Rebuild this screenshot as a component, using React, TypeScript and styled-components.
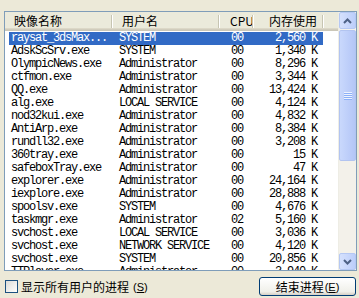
import styled, { createGlobalStyle } from "styled-components";

type Proc = {
  name: string;
  user: string;
  cpu: string;
  mem: string;
};

const processes: Proc[] = [
  { name: "raysat_3dsMax...", user: "SYSTEM", cpu: "00", mem: "2,560 K" },
  { name: "AdskScSrv.exe", user: "SYSTEM", cpu: "00", mem: "1,340 K" },
  { name: "OlympicNews.exe", user: "Administrator", cpu: "00", mem: "8,296 K" },
  { name: "ctfmon.exe", user: "Administrator", cpu: "00", mem: "3,344 K" },
  { name: "QQ.exe", user: "Administrator", cpu: "00", mem: "13,424 K" },
  { name: "alg.exe", user: "LOCAL SERVICE", cpu: "00", mem: "4,124 K" },
  { name: "nod32kui.exe", user: "Administrator", cpu: "00", mem: "4,832 K" },
  { name: "AntiArp.exe", user: "Administrator", cpu: "00", mem: "8,384 K" },
  { name: "rundll32.exe", user: "Administrator", cpu: "00", mem: "3,208 K" },
  { name: "360tray.exe", user: "Administrator", cpu: "00", mem: "15 K" },
  { name: "safeboxTray.exe", user: "Administrator", cpu: "00", mem: "47 K" },
  { name: "explorer.exe", user: "Administrator", cpu: "00", mem: "24,164 K" },
  { name: "iexplore.exe", user: "Administrator", cpu: "00", mem: "28,888 K" },
  { name: "spoolsv.exe", user: "SYSTEM", cpu: "00", mem: "4,676 K" },
  { name: "taskmgr.exe", user: "Administrator", cpu: "02", mem: "5,160 K" },
  { name: "svchost.exe", user: "LOCAL SERVICE", cpu: "00", mem: "3,036 K" },
  { name: "svchost.exe", user: "NETWORK SERVICE", cpu: "00", mem: "4,120 K" },
  { name: "svchost.exe", user: "SYSTEM", cpu: "00", mem: "20,856 K" },
  { name: "TTPlayer.exe", user: "Administrator", cpu: "00", mem: "3,940 K" },
];

const GlobalStyle = createGlobalStyle`
  html, body {
    margin: 0;
    padding: 0;
    background: #ece9d8;
  }
`;

export default function App() {
  return (
    <>
      <GlobalStyle />
      <Window>
        <ListBox>
          <ListArea>
            <Header>
              <HeadCell $w={107} $pl={9}>映像名称</HeadCell>
              <HeadCell $w={107} $pl={10}>用户名</HeadCell>
              <HeadCell $w={34} $pl={11}>CPU</HeadCell>
              <HeadCell $w={70} $pr={6} $right>
                内存使用
              </HeadCell>
              <HeadFill />
            </Header>
            <Rows>
              {processes.map((p, i) => (
                <Row key={i} $selected={i === 0}>
                  <Cell $w={103} $pl={2}>{p.name}</Cell>
                  <Cell $w={107} $pl={7}>{p.user}</Cell>
                  <Cell $w={34} $pl={12}>{p.cpu}</Cell>
                  <Cell $w={70} $pr={6} $right>
                    {p.mem}
                  </Cell>
                </Row>
              ))}
            </Rows>
          </ListArea>
          <ScrollBar>
            <ArrowButton>
              <svg width="9" height="6" viewBox="0 0 9 6">
                <path d="M1 5 L4.5 1.5 L8 5" fill="none" stroke="#4d6185" strokeWidth="2" />
              </svg>
            </ArrowButton>
            <Thumb>
              <Grip />
            </Thumb>
            <Track />
            <ArrowButton>
              <svg width="9" height="6" viewBox="0 0 9 6">
                <path d="M1 1 L4.5 4.5 L8 1" fill="none" stroke="#4d6185" strokeWidth="2" />
              </svg>
            </ArrowButton>
          </ScrollBar>
        </ListBox>
        <Footer>
          <CheckLabel>
            <CheckBox />
            显示所有用户的进程<Key>(<u>S</u>)</Key>
          </CheckLabel>
          <XpButton>
            结束进程<Key>(<u>E</u>)</Key>
          </XpButton>
        </Footer>
      </Window>
    </>
  );
}

const Window = styled.div`
  width: 359px;
  height: 298px;
  box-sizing: border-box;
  background: #ece9d8;
  padding: 11px 2px 0 4px;
  display: flex;
  flex-direction: column;
  font-family: "Noto Sans CJK SC", sans-serif;
  font-size: 12px;
  color: #000;
  overflow: hidden;
`;

const ListBox = styled.div`
  height: 260px;
  box-sizing: border-box;
  border: 1px solid #7f9db9;
  background: #fff;
  display: flex;
`;

const ListArea = styled.div`
  flex: 1;
  overflow: hidden;
  display: flex;
  flex-direction: column;
`;

const Header = styled.div`
  height: 19px;
  flex: none;
  display: flex;
  background: linear-gradient(to bottom, #ebeadb 0, #ebeadb 16px, #e2decd 16px, #d6d2c2 17px, #cbc7b8 18px);
`;

const HeadCell = styled.div<{ $w: number; $pl?: number; $pr?: number; $right?: boolean }>`
  position: relative;
  width: ${(p) => p.$w}px;
  flex: none;
  box-sizing: border-box;
  padding-left: ${(p) => p.$pl ?? 0}px;
  padding-right: ${(p) => p.$pr ?? 0}px;
  text-align: ${(p) => (p.$right ? "right" : "left")};
  line-height: 18px;
  white-space: nowrap;
  &::after {
    content: "";
    position: absolute;
    right: 0;
    top: 3px;
    height: 13px;
    width: 1px;
    background: #c7c5b2;
    box-shadow: 1px 0 0 #fff;
  }
`;

const HeadFill = styled.div`
  flex: 1;
`;

const Rows = styled.div`
  display: flex;
  flex-direction: column;
  padding-top: 1px;
`;

const Row = styled.div<{ $selected?: boolean }>`
  display: flex;
  height: 13px;
  margin-left: 4px;
  width: 314px;
  background: ${(p) => (p.$selected ? "#316ac5" : "transparent")};
  color: ${(p) => (p.$selected ? "#fff" : "#000")};
  font-family: "Liberation Mono", monospace;
  font-size: 12px;
  letter-spacing: -1.2px;
  line-height: 13px;
`;

const Cell = styled.div<{ $w: number; $pl?: number; $pr?: number; $right?: boolean }>`
  width: ${(p) => p.$w}px;
  flex: none;
  box-sizing: border-box;
  padding-left: ${(p) => p.$pl ?? 0}px;
  padding-right: ${(p) => p.$pr ?? 0}px;
  text-align: ${(p) => (p.$right ? "right" : "left")};
  white-space: nowrap;
  overflow: hidden;
`;

const ScrollBar = styled.div`
  width: 17px;
  flex: none;
  display: flex;
  flex-direction: column;
  background: #f3f1ea;
  border-left: 1px solid #eeede5;
`;

const ArrowButton = styled.div`
  height: 17px;
  flex: none;
  box-sizing: border-box;
  border: 1px solid #b5c8f3;
  border-radius: 2px;
  background: linear-gradient(to right, #d5e1fd, #bccefa);
  display: flex;
  align-items: center;
  justify-content: center;
`;

const Thumb = styled.div`
  height: 131px;
  flex: none;
  margin-top: 1px;
  box-sizing: border-box;
  border: 1px solid #b2c4f0;
  border-radius: 2px;
  background: linear-gradient(to right, #c9d8fc, #bccdf9 60%, #b4c6f6);
  display: flex;
  align-items: center;
  justify-content: center;
`;

const Grip = styled.div`
  width: 8px;
  height: 8px;
  background: repeating-linear-gradient(to bottom, #eef3fe 0, #eef3fe 1px, #8cb0f8 1px, #8cb0f8 2px);
`;

const Track = styled.div`
  flex: 1;
`;

const Footer = styled.div`
  display: flex;
  align-items: center;
  justify-content: space-between;
  margin-top: 6px;
  padding-right: 1px;
`;

const CheckLabel = styled.div`
  display: flex;
  align-items: center;
  gap: 3px;
  font-size: 12px;
  padding-left: 1px;
`;

const CheckBox = styled.span`
  width: 13px;
  height: 13px;
  box-sizing: border-box;
  border: 1px solid #1c5180;
  background: linear-gradient(135deg, #dcdcd7, #fff);
`;

const Key = styled.span`
  font-family: "Liberation Sans", sans-serif;
  font-size: 11px;
  margin-left: 1px;
`;

const XpButton = styled.button`
  width: 97px;
  height: 19px;
  box-sizing: border-box;
  border: 1px solid #003c74;
  border-radius: 3px;
  background: linear-gradient(to bottom, #fff, #f0f0ea 80%, #d6d0c5);
  font-family: "Noto Sans CJK SC", sans-serif;
  font-size: 12px;
  color: #000;
  padding: 0;
  display: flex;
  align-items: center;
  justify-content: center;
`;
